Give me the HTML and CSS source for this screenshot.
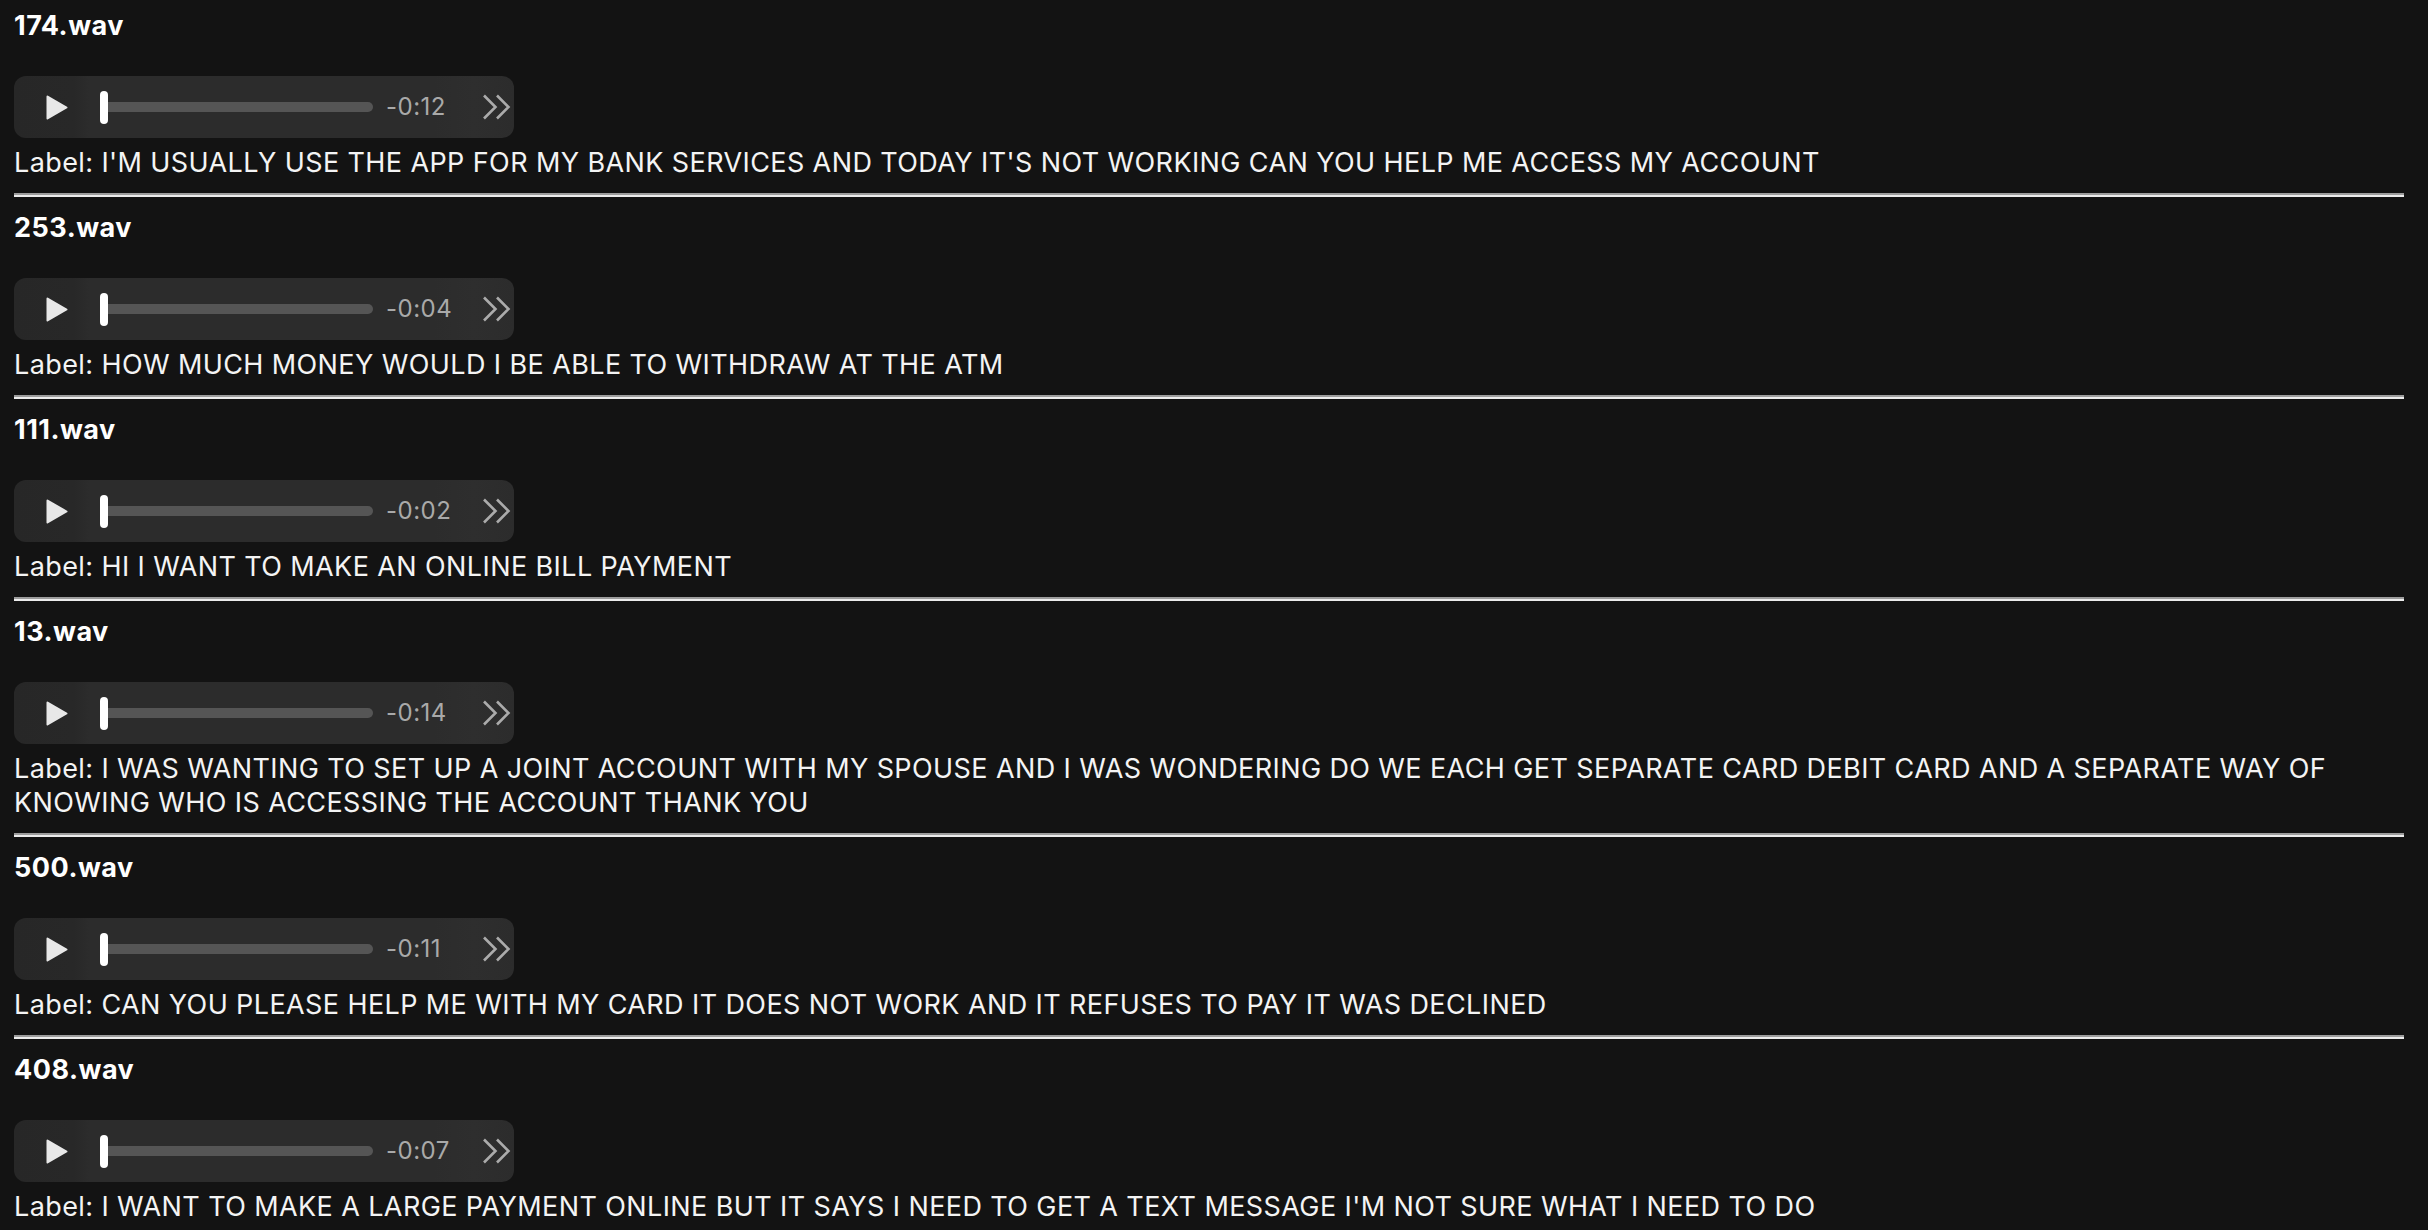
FILE: index.html
```html
<!DOCTYPE html>
<html lang="en">
<head>
<meta charset="utf-8">
<title>Audio samples</title>
<link rel="stylesheet" href="styles.css">
</head>
<body>
<main class="list">

<section class="item">
  <h4 class="name">174.wav</h4>
  <div class="player">
    <svg class="play" width="22" height="25" viewBox="0 0 22 25"><path d="M1.5 1.5 L20.5 12.5 L1.5 23.5 Z" fill="#e8e8e8" stroke="#e8e8e8" stroke-width="2" stroke-linejoin="round"/></svg>
    <span class="thumb"></span><span class="track"></span>
    <span class="time">-0:12</span>
    <svg class="more" width="30" height="26" viewBox="0 0 30 26"><path d="M2 1.5 L13.5 13 L2 24.5 M15 1.5 L26.5 13 L15 24.5" fill="none" stroke="#ababab" stroke-width="2.6"/></svg>
  </div>
  <p class="label">Label: I'M USUALLY USE THE APP FOR MY BANK SERVICES AND TODAY IT'S NOT WORKING CAN YOU HELP ME ACCESS MY ACCOUNT</p>
  <hr class="sep">
</section>

<section class="item">
  <h4 class="name">253.wav</h4>
  <div class="player">
    <svg class="play" width="22" height="25" viewBox="0 0 22 25"><path d="M1.5 1.5 L20.5 12.5 L1.5 23.5 Z" fill="#e8e8e8" stroke="#e8e8e8" stroke-width="2" stroke-linejoin="round"/></svg>
    <span class="thumb"></span><span class="track"></span>
    <span class="time">-0:04</span>
    <svg class="more" width="30" height="26" viewBox="0 0 30 26"><path d="M2 1.5 L13.5 13 L2 24.5 M15 1.5 L26.5 13 L15 24.5" fill="none" stroke="#ababab" stroke-width="2.6"/></svg>
  </div>
  <p class="label">Label: HOW MUCH MONEY WOULD I BE ABLE TO WITHDRAW AT THE ATM</p>
  <hr class="sep">
</section>

<section class="item">
  <h4 class="name">111.wav</h4>
  <div class="player">
    <svg class="play" width="22" height="25" viewBox="0 0 22 25"><path d="M1.5 1.5 L20.5 12.5 L1.5 23.5 Z" fill="#e8e8e8" stroke="#e8e8e8" stroke-width="2" stroke-linejoin="round"/></svg>
    <span class="thumb"></span><span class="track"></span>
    <span class="time">-0:02</span>
    <svg class="more" width="30" height="26" viewBox="0 0 30 26"><path d="M2 1.5 L13.5 13 L2 24.5 M15 1.5 L26.5 13 L15 24.5" fill="none" stroke="#ababab" stroke-width="2.6"/></svg>
  </div>
  <p class="label">Label: HI I WANT TO MAKE AN ONLINE BILL PAYMENT</p>
  <hr class="sep">
</section>

<section class="item">
  <h4 class="name">13.wav</h4>
  <div class="player">
    <svg class="play" width="22" height="25" viewBox="0 0 22 25"><path d="M1.5 1.5 L20.5 12.5 L1.5 23.5 Z" fill="#e8e8e8" stroke="#e8e8e8" stroke-width="2" stroke-linejoin="round"/></svg>
    <span class="thumb"></span><span class="track"></span>
    <span class="time">-0:14</span>
    <svg class="more" width="30" height="26" viewBox="0 0 30 26"><path d="M2 1.5 L13.5 13 L2 24.5 M15 1.5 L26.5 13 L15 24.5" fill="none" stroke="#ababab" stroke-width="2.6"/></svg>
  </div>
  <p class="label">Label: I WAS WANTING TO SET UP A JOINT ACCOUNT WITH MY SPOUSE AND I WAS WONDERING DO WE EACH GET SEPARATE CARD DEBIT CARD AND A SEPARATE WAY OF KNOWING WHO IS ACCESSING THE ACCOUNT THANK YOU</p>
  <hr class="sep">
</section>

<section class="item">
  <h4 class="name">500.wav</h4>
  <div class="player">
    <svg class="play" width="22" height="25" viewBox="0 0 22 25"><path d="M1.5 1.5 L20.5 12.5 L1.5 23.5 Z" fill="#e8e8e8" stroke="#e8e8e8" stroke-width="2" stroke-linejoin="round"/></svg>
    <span class="thumb"></span><span class="track"></span>
    <span class="time">-0:11</span>
    <svg class="more" width="30" height="26" viewBox="0 0 30 26"><path d="M2 1.5 L13.5 13 L2 24.5 M15 1.5 L26.5 13 L15 24.5" fill="none" stroke="#ababab" stroke-width="2.6"/></svg>
  </div>
  <p class="label">Label: CAN YOU PLEASE HELP ME WITH MY CARD IT DOES NOT WORK AND IT REFUSES TO PAY IT WAS DECLINED</p>
  <hr class="sep">
</section>

<section class="item">
  <h4 class="name">408.wav</h4>
  <div class="player">
    <svg class="play" width="22" height="25" viewBox="0 0 22 25"><path d="M1.5 1.5 L20.5 12.5 L1.5 23.5 Z" fill="#e8e8e8" stroke="#e8e8e8" stroke-width="2" stroke-linejoin="round"/></svg>
    <span class="thumb"></span><span class="track"></span>
    <span class="time">-0:07</span>
    <svg class="more" width="30" height="26" viewBox="0 0 30 26"><path d="M2 1.5 L13.5 13 L2 24.5 M15 1.5 L26.5 13 L15 24.5" fill="none" stroke="#ababab" stroke-width="2.6"/></svg>
  </div>
  <p class="label">Label: I WANT TO MAKE A LARGE PAYMENT ONLINE BUT IT SAYS I NEED TO GET A TEXT MESSAGE I'M NOT SURE WHAT I NEED TO DO</p>
  <hr class="sep">
</section>

</main>
</body>
</html>
```

FILE: styles.css
```css
html {
  overflow: hidden;
  background: #131313;
}

body {
  margin: 0;
  padding: 9px 24px 0 14px;
  background: #131313;
  color: #ffffff;
  font-family: Inter, "Noto Sans", "Liberation Sans", sans-serif;
}

.list {
  display: flex;
  flex-direction: column;
}

.item {
  display: flex;
  flex-direction: column;
  align-items: flex-start;
}

.name {
  margin: 0;
  font-size: 27px;
  line-height: 34px;
  font-weight: 700;
  letter-spacing: 0.5px;
  color: #ffffff;
}

.player {
  margin-top: 33px;
  width: 500px;
  height: 62px;
  box-sizing: border-box;
  border-radius: 12px;
  overflow: hidden;
  display: flex;
  align-items: center;
  padding-left: 32px;
  background: linear-gradient(to right, #272727 0, #282828 60px, #2c2c2c 75px, #2c2c2c 420px, #2e2e2e 460px, #2c2c2c 500px);
}

.play {
  flex: none;
  display: block;
}

.thumb {
  flex: none;
  margin-left: 32px;
  width: 8px;
  height: 33px;
  border-radius: 4px;
  background: #ffffff;
}

.track {
  flex: none;
  width: 265px;
  height: 10px;
  border-radius: 0 5px 5px 0;
  background: #555555;
}

.time {
  flex: none;
  margin-left: 13px;
  font-size: 24px;
  line-height: 30px;
  color: #a9a9a9;
  letter-spacing: 0.5px;
}

.more {
  flex: none;
  display: block;
  margin-left: auto;
  margin-right: 0;
  position: relative;
  left: -2px;
}

.label {
  margin: 8px 0 0;
  font-size: 27px;
  line-height: 34px;
  font-weight: 400;
  letter-spacing: 0.4px;
  color: #f4f4f4;
}

.sep {
  align-self: stretch;
  margin: 13px 0 14px;
  height: 0;
  border: 0;
  border-top: 2px solid #9c9c9c;
  border-bottom: 2px solid #ececec;
}
```
